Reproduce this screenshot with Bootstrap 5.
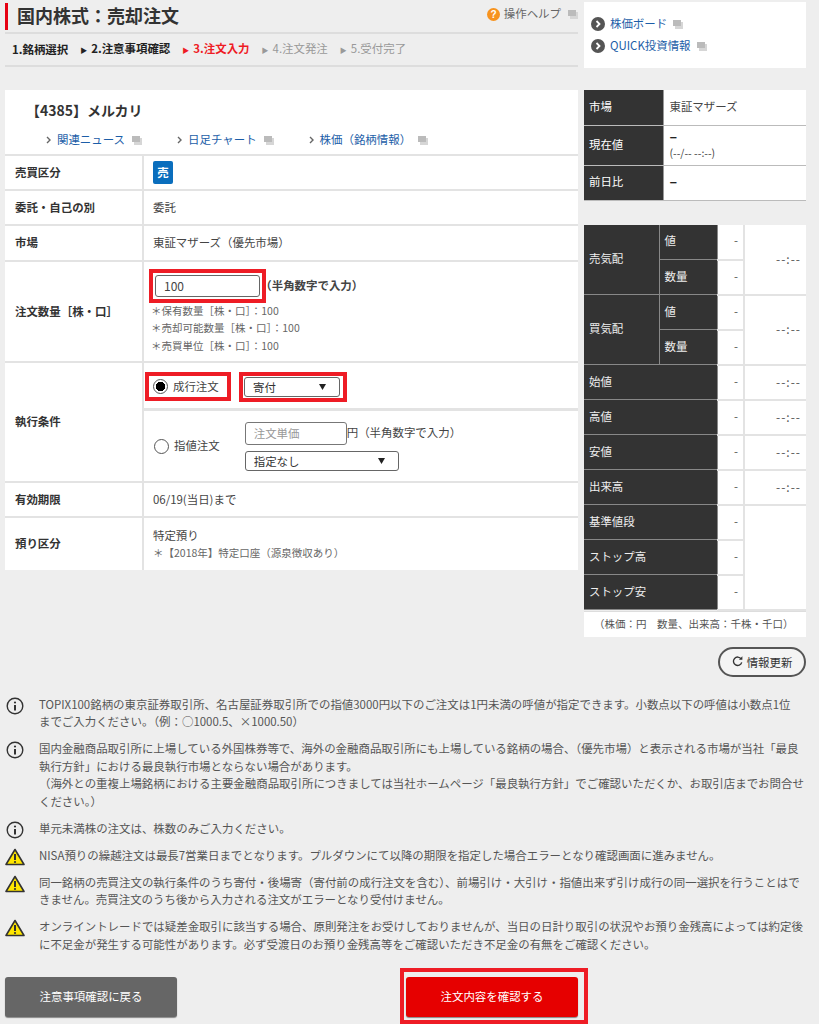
<!DOCTYPE html>
<html lang="ja"><head><meta charset="utf-8"><title>国内株式：売却注文</title>
<link rel="stylesheet" href="https://cdn.jsdelivr.net/npm/bootstrap@5.3.0/dist/css/bootstrap.min.css">
<style>
html,body{background:#eee}
body{font-family:"Noto Sans CJK JP","Noto Sans",sans-serif;font-size:11.45px;color:#333;line-height:17.5px;padding:0 13px 0 5px;width:819px;height:1024px;overflow:hidden}
a{color:#1c5ea8;text-decoration:none}
.lc{width:573px;flex:none}.rc{width:222px;flex:none;margin-left:6px}
.head{height:34px;border-bottom:2px solid #ddd;padding-top:3px}
.ttl{border-left:3px solid #e60012;height:27px;padding-left:9px;font-size:18px;line-height:25px;font-weight:700;margin:0;color:#333}
.help{color:#666;margin-top:2px}
.steps{height:33px;border-bottom:2px solid #ddd;padding-left:7px;font-weight:700;gap:12px;color:#222}
.steps .ar{font-size:7px;margin-right:4px}
.steps .red{color:#ee1c25}.steps .off{color:#999;font-weight:400}
.win{display:inline-block;vertical-align:-1px;margin-left:7px}
.qbox{background:#fff;height:66px;margin-top:2px;padding:11px 7px 0}
.qbox div{height:22px;display:flex;align-items:center;gap:5px}
.qbox .win{margin-left:1px}
.main{margin-top:22px}
.name{background:#fff;height:66px;border-bottom:2px solid #e3e3e3;margin:0}
.name h2{font-size:14px;font-weight:700;margin:0;padding:10px 0 0 21px;line-height:20px;height:41px}
.lnks{padding-left:41px;gap:35px}
.chev{display:inline-block;margin-right:6px;vertical-align:0}
.ot{margin:0;background:#fff;--bs-table-bg:#fff;width:573px;table-layout:fixed}
.ot th,.ot td{border:0;border-bottom:2px solid #e3e3e3;padding:0 9px;vertical-align:middle;font-size:11.45px;color:#444}
.ot tr:last-child th,.ot tr:last-child td{border-bottom:0}
.ot th{width:138px;font-weight:700;border-right:2px solid #e3e3e3;padding-left:10px;color:#333}
.sell{display:inline-flex;width:20px;height:23px;background:#0a6ebd;color:#fff;border-radius:2px;align-items:center;justify-content:center;font-weight:700}
.redbox{border:4px solid #ee1c25;display:inline-flex;align-items:center}
.qty{padding:0 0 0 5px}
.qty .form-control{width:105px;height:22px;border:1px solid #666;border-radius:3px;font-size:12px;padding:0 8px;color:#444;min-height:0}
.sub{font-size:10.5px;line-height:17.5px;color:#666;margin-top:-1px}
.qty .sub{margin:-1px 0 0 2px}
.hb{font-feature-settings:"halt"}
.exec1{height:48px;padding:9px 0 0 1px;border-bottom:3px solid #e3e3e3;gap:8px;align-items:flex-start}
.exec2{height:70px;padding:0 0 0 10px;gap:25px}
.form-check-input.rad{width:15px;height:15px;margin:0 5px 0 0;border:1px solid #555;float:none;flex:none}
.form-check-input.rad:checked{background-color:#fff;border-color:#555;background-image:radial-gradient(circle,#000 0 4.5px,transparent 5px)}
.redbox.r1{width:86px;height:29px;padding-left:4px}
.sel{height:20px;min-height:0;border:1px solid #666;border-radius:3px;font-size:11.45px;line-height:18px;padding:0 8px;color:#333;background-color:#fff;background-image:url("data:image/svg+xml,%3Csvg xmlns='http://www.w3.org/2000/svg' width='7' height='6'%3E%3Cpath d='M0 0h7L3.5 6z' fill='%23222'/%3E%3C/svg%3E");background-size:7px 6px;background-position:right 13px center}
.s1{width:96px}.s2{width:154px}
.price{width:102px;height:23px;border:1px solid #777;border-radius:3px;font-size:11.45px;padding:0 8px;min-height:0}
.price::placeholder{color:#999}
.it{margin:0;table-layout:fixed;width:222px;--bs-table-bg:#fff}
.it td,.it th{height:35px;border:0;border-bottom:1px solid #bbb;padding:0 5px 2px;vertical-align:middle;font-size:11.45px;color:#444;background:#fff;line-height:15px}
.it th{background:#333;color:#fff;font-weight:400;width:79px;--bs-table-bg:#333;border-right:1px solid #999;box-shadow:none}
.it td{padding-left:6px}
.dash{font-weight:700;color:#222;font-size:14px}
.qt{margin:24px 0 0;table-layout:fixed;width:222px;--bs-table-bg:#fff}
.qt td,.qt th{height:35px;border:0;padding:0 5px 2px;vertical-align:middle;font-size:11.45px;line-height:15px;background:#fff;color:#555}
.qt th{background:#333;color:#eee;font-weight:400;border-bottom:1px solid #888;border-right:1px solid #888;box-shadow:none}
.qt td{border-bottom:2px solid #e3e3e3;text-align:right}
.qt td.v{border-right:2px solid #e3e3e3}
.qt td.t{padding-right:5px;letter-spacing:1px;font-size:12px}
.cap{background:#fff;height:26px;line-height:24px;padding-left:10px;font-size:10.5px;color:#555;border-top:1px solid #ddd}
.upd{margin:10px 0 0 134px;width:88px;height:30px;border:2px solid #555;border-radius:15px;background:#f4f4f4;color:#333;font-size:11.45px;padding:0;line-height:26px;display:flex;align-items:center;justify-content:center;gap:4px}
.notes{margin-top:19px;list-style:none;padding:0 0 0 34px;color:#555;width:801px}
.notes li{position:relative;margin-bottom:9.5px;white-space:nowrap}
.notes svg{position:absolute;left:-33px;top:1px}
.notes svg.tri{left:-34px}
.btns{height:56px;position:relative;margin-top:-1px}
.btn.b1,.btn.b2{width:172px;height:40px;font-size:11.45px;color:#fff;border:0;border-radius:3px;padding:0;box-shadow:0 1px 1px #888}
.btn.b1{background:#666;margin-top:9px}
.btn.b2{background:#e60000}
.rb{border:4px solid #ee1c25;background:#eee;margin-left:223px;height:56px;width:188px;display:flex;align-items:flex-start;padding:5px 6px 0 2px}
.r34{height:34px}.r35{height:35px}.r36{height:36px}.r40{height:40px}.r53{height:53px}.r101{height:101px}.r120{height:120px}
.c75{width:75px}.c58{width:58px}.c27{width:27px}.c62{width:62px}
.p-half{padding:2px}.p-sel{padding:1px 3px 1px 1px}.col2{gap:6px}.small-d{font-size:10.5px}.help-i{margin-top:3px}
</style></head><body>
<svg width="0" height="0" class="d-block"><defs>
<symbol id="w" viewBox="0 0 10 9"><path d="M0 0h8v6H0z" fill="#bbb"/><path d="M8 2h2v7H2V6h6z" fill="#d6d6d6"/></symbol>
<symbol id="go" viewBox="0 0 14 14"><circle cx="7" cy="7" r="7" fill="#555"/><path d="M5.5 4l3 3-3 3" fill="none" stroke="#fff" stroke-width="1.8"/></symbol>
<symbol id="ch" viewBox="0 0 5 8"><path d="M1 1l3 3-3 3" fill="none" stroke="#666" stroke-width="1.4"/></symbol>
<symbol id="inf" viewBox="0 0 18 18"><circle cx="9" cy="9" r="7.8" fill="none" stroke="#333" stroke-width="1.4"/><circle cx="9" cy="5.5" r="1.1" fill="#333"/><path d="M9 8v5.5" stroke="#333" stroke-width="2"/></symbol>
<symbol id="war" viewBox="0 0 20 18"><path d="M10 1.5L19 16.5H1z" fill="#ffe600" stroke="#333" stroke-width="1.6" stroke-linejoin="round"/><path d="M10 6v6" stroke="#333" stroke-width="2"/><circle cx="10" cy="14" r="1.1" fill="#333"/></symbol>
</defs></svg>
<div class="d-flex">
 <div class="lc">
  <div class="head d-flex justify-content-between">
   <h1 class="ttl">国内株式：売却注文</h1>
   <div class="help d-flex align-items-start gap-1"><svg class="help-i" width="13" height="13" viewBox="0 0 13 13"><circle cx="6.5" cy="6.5" r="6.5" fill="#f7931e"/><text x="6.5" y="10" font-size="10" fill="#fff" text-anchor="middle" font-family="Liberation Sans" font-weight="700">?</text></svg><span>操作ヘルプ<svg class="win" width="10" height="9"><use href="#w"/></svg></span></div>
  </div>
  <div class="steps d-flex align-items-center">
   <span>1.銘柄選択</span>
   <span><span class="ar">▶</span>2.注意事項確認</span>
   <span class="red"><span class="ar">▶</span>3.注文入力</span>
   <span class="off"><span class="ar">▶</span>4.注文発注</span>
   <span class="off"><span class="ar">▶</span>5.受付完了</span>
  </div>
 </div>
 <div class="rc qbox">
  <div><svg width="14" height="14"><use href="#go"/></svg><a href="#">株価ボード</a><svg class="win" width="10" height="9"><use href="#w"/></svg></div>
  <div><svg width="14" height="14"><use href="#go"/></svg><a href="#">QUICK投資情報</a><svg class="win" width="10" height="9"><use href="#w"/></svg></div>
 </div>
</div>
<div class="d-flex main">
 <div class="lc">
  <div class="name">
   <h2>【4385】メルカリ</h2>
   <div class="lnks d-flex">
    <span><svg class="chev" width="5" height="8"><use href="#ch"/></svg><a href="#">関連ニュース</a><svg class="win" width="10" height="9"><use href="#w"/></svg></span>
    <span><svg class="chev" width="5" height="8"><use href="#ch"/></svg><a href="#">日足チャート</a><svg class="win" width="10" height="9"><use href="#w"/></svg></span>
    <span><svg class="chev" width="5" height="8"><use href="#ch"/></svg><a href="#">株価（銘柄情報）</a><svg class="win" width="10" height="9"><use href="#w"/></svg></span>
   </div>
  </div>
  <table class="table ot"><tbody>
   <tr class="r34"><th>売買区分</th><td><span class="sell">売</span></td></tr>
   <tr class="r35"><th>委託・自己の別</th><td>委託</td></tr>
   <tr class="r36"><th>市場</th><td>東証マザーズ（優先市場）</td></tr>
   <tr class="r101"><th>注文数量［株・口］</th><td class="p-0"><div class="qty">
     <div class="d-flex align-items-center"><span class="redbox p-half"><input class="form-control" value="100" aria-label="注文数量"></span><span class="fw-bold"><span class="hb">（</span>半角数字で入力<span class="hb">）</span></span></div>
     <div class="sub">＊保有数量［株・口］：100<br>＊売却可能数量［株・口］：100<br>＊売買単位［株・口］：100</div></div></td></tr>
   <tr class="r120"><th>執行条件</th><td class="p-0">
     <div class="exec1 d-flex"><span class="redbox r1"><input class="form-check-input rad" type="radio" name="e" checked aria-label="成行注文">成行注文</span><span class="redbox p-sel"><select class="form-select sel s1" aria-label="寄付"><option>寄付</option></select></span></div>
     <div class="exec2 d-flex align-items-center">
      <div class="d-flex align-items-center"><input class="form-check-input rad" type="radio" name="e" aria-label="指値注文">指値注文</div>
      <div class="d-flex flex-column col2"><div class="d-flex align-items-center"><input class="form-control price" placeholder="注文単価"><span>円（半角数字で入力）</span></div><select class="form-select sel s2" aria-label="指定なし"><option>指定なし</option></select></div>
     </div></td></tr>
   <tr class="r35"><th>有効期限</th><td>06/19(当日)まで</td></tr>
   <tr class="r53"><th>預り区分</th><td>特定預り<div class="sub">＊【2018年】特定口座（源泉徴収あり）</div></td></tr>
  </tbody></table>
 </div>
 <div class="rc">
  <table class="table it"><tbody>
   <tr><th>市場</th><td>東証マザーズ</td></tr>
   <tr class="r40"><th>現在値</th><td><span class="dash">–</span><br><span class="small-d">(--/-- --:--)</span></td></tr>
   <tr><th>前日比</th><td><span class="dash">–</span></td></tr>
  </tbody></table>
  <table class="table qt"><colgroup><col class="c75"><col class="c58"><col class="c27"><col class="c62"></colgroup><tbody>
   <tr><th rowspan="2">売気配</th><th>値</th><td class="v">-</td><td class="t" rowspan="2">--:--</td></tr>
   <tr><th>数量</th><td class="v">-</td></tr>
   <tr><th rowspan="2">買気配</th><th>値</th><td class="v">-</td><td class="t" rowspan="2">--:--</td></tr>
   <tr><th>数量</th><td class="v">-</td></tr>
   <tr><th colspan="2">始値</th><td class="v">-</td><td class="t">--:--</td></tr>
   <tr><th colspan="2">高値</th><td class="v">-</td><td class="t">--:--</td></tr>
   <tr><th colspan="2">安値</th><td class="v">-</td><td class="t">--:--</td></tr>
   <tr><th colspan="2">出来高</th><td class="v">-</td><td class="t">--:--</td></tr>
   <tr><th colspan="2">基準値段</th><td class="v">-</td><td rowspan="3"></td></tr>
   <tr><th colspan="2">ストップ高</th><td class="v">-</td></tr>
   <tr><th colspan="2">ストップ安</th><td class="v">-</td></tr>
  </tbody></table>
  <div class="cap">（株価：円　数量、出来高：千株・千口）</div>
  <button class="btn upd" type="button"><svg width="11" height="11" viewBox="0 0 12 12"><path d="M10 3.2A4.6 4.6 0 1 0 10.6 7" fill="none" stroke="#333" stroke-width="1.5"/><path d="M7.5 4h3.8V.4z" fill="#333"/></svg>情報更新</button>
 </div>
</div>
<ul class="notes">
 <li><svg width="18" height="18"><use href="#inf"/></svg>TOPIX100銘柄の東京証券取引所、名古屋証券取引所での指値3000円以下のご注文は1円未満の呼値が指定できます。小数点以下の呼値は小数点1位<br>までご入力ください。（例：○1000.5、×1000.50）</li>
 <li><svg width="18" height="18"><use href="#inf"/></svg>国内金融商品取引所に上場している外国株券等で、海外の金融商品取引所にも上場している銘柄の場合、（優先市場）と表示される市場が当社「最良<br>執行方針」における最良執行市場とならない場合があります。<br>（海外との重複上場銘柄における主要金融商品取引所につきましては当社ホームページ「最良執行方針」でご確認いただくか、お取引店までお問合せ<br>ください。）</li>
 <li><svg width="18" height="18"><use href="#inf"/></svg>単元未満株の注文は、株数のみご入力ください。</li>
 <li><svg class="tri" width="20" height="18"><use href="#war"/></svg>NISA預りの繰越注文は最長7営業日までとなります。プルダウンにて以降の期限を指定した場合エラーとなり確認画面に進みません。</li>
 <li><svg class="tri" width="20" height="18"><use href="#war"/></svg>同一銘柄の売買注文の執行条件のうち寄付・後場寄（寄付前の成行注文を含む）、前場引け・大引け・指値出来ず引け成行の同一選択を行うことはで<br>きません。売買注文のうち後から入力される注文がエラーとなり受付けません。</li>
 <li><svg class="tri" width="20" height="18"><use href="#war"/></svg>オンライントレードでは疑差金取引に該当する場合、原則発注をお受けしておりませんが、当日の日計り取引の状況やお預り金残高によっては約定後<br>に不足金が発生する可能性があります。必ず受渡日のお預り金残高等をご確認いただき不足金の有無をご確認ください。</li>
</ul>
<div class="btns d-flex align-items-start">
 <button class="btn b1" type="button">注意事項確認に戻る</button>
 <div class="rb"><button class="btn b2" type="button">注文内容を確認する</button></div>
</div>
<script src="https://cdn.jsdelivr.net/npm/bootstrap@5.3.0/dist/js/bootstrap.bundle.min.js"></script>
</body></html>
